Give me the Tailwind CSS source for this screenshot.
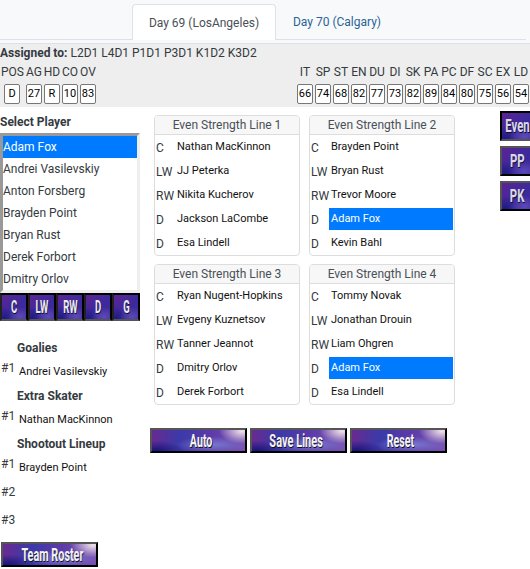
<!doctype html>
<html><head><meta charset="utf-8"><script src="https://cdn.jsdelivr.net/npm/@tailwindcss/browser@4"></script></head>
<body class="w-[530px] h-[569px] overflow-hidden bg-white font-['Roboto',sans-serif] text-[12px] leading-[18px] text-[#212529]">
<!-- tabs -->
<div class="h-[44px] bg-[#f8f9fa] pt-[4px] border-b border-[#dee2e6]">
  <div class="flex h-[36px] pl-[132px] mr-[4px] border-b border-[#dee2e6]">
    <div class="w-[144px] h-[36px] bg-white border border-b-0 border-[#dee2e6] rounded-t-[4px] flex items-center justify-center text-[#495057]">Day 69 (LosAngeles)</div>
    <div class="w-[122px] h-[35px] flex items-center justify-center text-[#2a6496]">Day 70 (Calgary)</div>
  </div>
</div>
<!-- player info -->
<div class="h-[63px] bg-[#eeeeee] text-[#343a40]">
  <div class="h-[19px] pb-[2px] flex items-center"><b class="font-bold">Assigned to:</b><span class="ml-[3px]">L2D1 L4D1 P1D1 P3D1 K1D2 K3D2</span></div>
  <div class="flex">
    <div class="w-[25px] flex flex-col items-start"><span class="pl-[1px]">POS</span><span class="mt-[3px] ml-[4px] w-[16px] h-[20px] bg-white border border-[#777] rounded-[2px] text-[11px] text-black flex items-center justify-center">D</span></div>
    <div class="w-[18px] flex flex-col items-center"><span>AG</span><span class="mt-[3px] w-[16px] h-[20px] bg-white border border-[#777] rounded-[2px] text-[11px] text-black flex items-center justify-center">27</span></div>
    <div class="w-[18px] flex flex-col items-center"><span>HD</span><span class="mt-[3px] w-[16px] h-[20px] bg-white border border-[#777] rounded-[2px] text-[11px] text-black flex items-center justify-center">R</span></div>
    <div class="w-[18px] flex flex-col items-center"><span>CO</span><span class="mt-[3px] w-[16px] h-[20px] bg-white border border-[#777] rounded-[2px] text-[11px] text-black flex items-center justify-center">10</span></div>
    <div class="w-[18px] flex flex-col items-center"><span>OV</span><span class="mt-[3px] w-[16px] h-[20px] bg-white border border-[#777] rounded-[2px] text-[11px] text-black flex items-center justify-center">83</span></div>
    <div class="flex-1"></div>
    <div class="w-[18px] flex flex-col items-center"><span>IT</span><span class="mt-[3px] w-[16px] h-[20px] bg-white border border-[#777] rounded-[2px] text-[11px] text-black flex items-center justify-center">66</span></div>
    <div class="w-[18px] flex flex-col items-center"><span>SP</span><span class="mt-[3px] w-[16px] h-[20px] bg-white border border-[#777] rounded-[2px] text-[11px] text-black flex items-center justify-center">74</span></div>
    <div class="w-[18px] flex flex-col items-center"><span>ST</span><span class="mt-[3px] w-[16px] h-[20px] bg-white border border-[#777] rounded-[2px] text-[11px] text-black flex items-center justify-center">68</span></div>
    <div class="w-[18px] flex flex-col items-center"><span>EN</span><span class="mt-[3px] w-[16px] h-[20px] bg-white border border-[#777] rounded-[2px] text-[11px] text-black flex items-center justify-center">82</span></div>
    <div class="w-[18px] flex flex-col items-center"><span>DU</span><span class="mt-[3px] w-[16px] h-[20px] bg-white border border-[#777] rounded-[2px] text-[11px] text-black flex items-center justify-center">77</span></div>
    <div class="w-[18px] flex flex-col items-center"><span>DI</span><span class="mt-[3px] w-[16px] h-[20px] bg-white border border-[#777] rounded-[2px] text-[11px] text-black flex items-center justify-center">73</span></div>
    <div class="w-[18px] flex flex-col items-center"><span>SK</span><span class="mt-[3px] w-[16px] h-[20px] bg-white border border-[#777] rounded-[2px] text-[11px] text-black flex items-center justify-center">82</span></div>
    <div class="w-[18px] flex flex-col items-center"><span>PA</span><span class="mt-[3px] w-[16px] h-[20px] bg-white border border-[#777] rounded-[2px] text-[11px] text-black flex items-center justify-center">89</span></div>
    <div class="w-[18px] flex flex-col items-center"><span>PC</span><span class="mt-[3px] w-[16px] h-[20px] bg-white border border-[#777] rounded-[2px] text-[11px] text-black flex items-center justify-center">84</span></div>
    <div class="w-[18px] flex flex-col items-center"><span>DF</span><span class="mt-[3px] w-[16px] h-[20px] bg-white border border-[#777] rounded-[2px] text-[11px] text-black flex items-center justify-center">80</span></div>
    <div class="w-[18px] flex flex-col items-center"><span>SC</span><span class="mt-[3px] w-[16px] h-[20px] bg-white border border-[#777] rounded-[2px] text-[11px] text-black flex items-center justify-center">75</span></div>
    <div class="w-[18px] flex flex-col items-center"><span>EX</span><span class="mt-[3px] w-[16px] h-[20px] bg-white border border-[#777] rounded-[2px] text-[11px] text-black flex items-center justify-center">56</span></div>
    <div class="w-[18px] flex flex-col items-center"><span>LD</span><span class="mt-[3px] w-[16px] h-[20px] bg-white border border-[#777] rounded-[2px] text-[11px] text-black flex items-center justify-center">54</span></div>
  </div>
</div>
<div class="flex">
  <!-- left -->
  <div class="w-[150px] shrink-0">
    <div class="h-[26px] pt-[6px] font-bold text-[#343a40]">Select Player</div>
    <div class="w-[140px] h-[160px] border-[3px] border-t-[#999] border-l-[#999] border-r-[#eee] border-b-[#eee] text-[#343a40]">
      <div class="h-[22px] bg-[#007bff] text-white flex items-center">Adam Fox</div>
      <div class="h-[22px] flex items-center">Andrei Vasilevskiy</div>
      <div class="h-[22px] flex items-center">Anton Forsberg</div>
      <div class="h-[22px] flex items-center">Brayden Point</div>
      <div class="h-[22px] flex items-center">Bryan Rust</div>
      <div class="h-[22px] flex items-center">Derek Forbort</div>
      <div class="h-[22px] flex items-center">Dmitry Orlov</div>
    </div>
    <div class="flex w-[140px] h-[28px]">
      <div class="w-[28px] h-[28px] border-[2px] border-t-black border-l-[#222] border-r-black border-b-[#555] bg-[radial-gradient(ellipse_50%_40%_at_75%_90%,#5a4ab8_0%,transparent_100%),radial-gradient(ellipse_40%_50%_at_10%_100%,#1c1a80_0%,transparent_100%),linear-gradient(135deg,#5c2494,#3a2a9c_60%,#4a2a98)] flex items-center justify-center overflow-hidden"><span class="font-bold text-[19px] text-[#ecebf6] scale-x-[0.5] [text-shadow:1px_1px_0_#111]">C</span></div>
      <div class="w-[28px] h-[28px] border-[2px] border-t-black border-l-[#222] border-r-black border-b-[#555] bg-[radial-gradient(ellipse_50%_40%_at_75%_90%,#5a4ab8_0%,transparent_100%),radial-gradient(ellipse_40%_50%_at_10%_100%,#1c1a80_0%,transparent_100%),linear-gradient(135deg,#5c2494,#3a2a9c_60%,#4a2a98)] flex items-center justify-center overflow-hidden"><span class="font-bold text-[19px] text-[#ecebf6] scale-x-[0.5] [text-shadow:1px_1px_0_#111]">LW</span></div>
      <div class="w-[28px] h-[28px] border-[2px] border-t-black border-l-[#222] border-r-black border-b-[#555] bg-[radial-gradient(ellipse_50%_40%_at_75%_90%,#5a4ab8_0%,transparent_100%),radial-gradient(ellipse_40%_50%_at_10%_100%,#1c1a80_0%,transparent_100%),linear-gradient(135deg,#5c2494,#3a2a9c_60%,#4a2a98)] flex items-center justify-center overflow-hidden"><span class="font-bold text-[19px] text-[#ecebf6] scale-x-[0.5] [text-shadow:1px_1px_0_#111]">RW</span></div>
      <div class="w-[28px] h-[28px] border-[2px] border-t-black border-l-[#222] border-r-black border-b-[#555] bg-[radial-gradient(ellipse_50%_40%_at_75%_90%,#5a4ab8_0%,transparent_100%),radial-gradient(ellipse_40%_50%_at_10%_100%,#1c1a80_0%,transparent_100%),linear-gradient(135deg,#5c2494,#3a2a9c_60%,#4a2a98)] flex items-center justify-center overflow-hidden"><span class="font-bold text-[19px] text-[#ecebf6] scale-x-[0.5] [text-shadow:1px_1px_0_#111]">D</span></div>
      <div class="w-[28px] h-[28px] border-[2px] border-t-black border-l-[#222] border-r-black border-b-[#555] bg-[radial-gradient(ellipse_50%_40%_at_75%_90%,#5a4ab8_0%,transparent_100%),radial-gradient(ellipse_40%_50%_at_10%_100%,#1c1a80_0%,transparent_100%),linear-gradient(135deg,#5c2494,#3a2a9c_60%,#4a2a98)] flex items-center justify-center overflow-hidden"><span class="font-bold text-[19px] text-[#ecebf6] scale-x-[0.5] [text-shadow:1px_1px_0_#111]">G</span></div>
    </div>
    <div class="pl-[17px] mt-[18px] h-[18px] font-bold text-[#343a40]">Goalies</div>
    <div class="flex h-[30px] text-[#343a40]"><span class="w-[19px] pl-[1px] pt-[2px]">#1</span><span class="pt-[6px] text-[11px] text-[#111]">Andrei Vasilevskiy</span></div>
    <div class="pl-[17px] h-[18px] font-bold text-[#343a40]">Extra Skater</div>
    <div class="flex h-[30px] text-[#343a40]"><span class="w-[19px] pl-[1px] pt-[2px]">#1</span><span class="pt-[6px] text-[11px] text-[#111]">Nathan MacKinnon</span></div>
    <div class="pl-[17px] h-[18px] font-bold text-[#343a40]">Shootout Lineup</div>
    <div class="flex h-[28px] text-[#343a40]"><span class="w-[19px] pl-[1px] pt-[2px]">#1</span><span class="pt-[6px] text-[11px] text-[#111]">Brayden Point</span></div>
    <div class="h-[28px] pl-[1px] pt-[2px] text-[#343a40]">#2</div>
    <div class="h-[28px] pl-[1px] pt-[2px] text-[#343a40]">#3</div>
    <div class="ml-[1px] mt-[5px] pl-[6px] w-[97px] h-[25px] border-[2px] border-t-[#555] border-l-[#555] border-r-black border-b-black bg-[radial-gradient(ellipse_25%_60%_at_97%_5%,#f0e4ea_0%,transparent_100%),radial-gradient(ellipse_30%_50%_at_5%_100%,#14147a_0%,transparent_100%),radial-gradient(ellipse_40%_40%_at_65%_70%,#7878d0_0%,transparent_100%),linear-gradient(95deg,#6a2a90,#3a3aa8_30%,#5a3aa8_60%,#7a50b0)] flex items-center justify-center overflow-hidden"><span class="font-bold text-[19px] whitespace-nowrap text-[#f4f3fa] scale-x-[0.57] [text-shadow:1px_1px_0_#111]">Team Roster</span></div>
  </div>
  <!-- lines -->
  <div class="w-[350px] shrink-0 pl-[4px] pt-[8px]">
    <div class="grid grid-cols-[146px_146px] gap-x-[9px] gap-y-[8px]">
      <div class="h-[141px] border border-[#ddd] rounded-[4px] overflow-hidden">
        <div class="h-[19px] bg-[#f7f7f7] border-b border-[#ddd] flex items-center justify-center text-[#495057]">Even Strength Line 1</div>
        <div class="pt-[1px] text-[11px] text-[#111]">
          <div class="flex h-[24px]"><span class="w-[20px] pl-[1px] pt-[3px] text-[12px] text-[#343a40]">C</span><span class="flex-1 mr-[1px] h-[22px] pl-[2px] flex items-center">Nathan MacKinnon</span></div>
          <div class="flex h-[24px]"><span class="w-[20px] pl-[1px] pt-[3px] text-[12px] text-[#343a40]">LW</span><span class="flex-1 mr-[1px] h-[22px] pl-[2px] flex items-center">JJ Peterka</span></div>
          <div class="flex h-[24px]"><span class="w-[20px] pl-[1px] pt-[3px] text-[12px] text-[#343a40]">RW</span><span class="flex-1 mr-[1px] h-[22px] pl-[2px] flex items-center">Nikita Kucherov</span></div>
          <div class="flex h-[24px]"><span class="w-[20px] pl-[1px] pt-[3px] text-[12px] text-[#343a40]">D</span><span class="flex-1 mr-[1px] h-[22px] pl-[2px] flex items-center">Jackson LaCombe</span></div>
          <div class="flex h-[24px]"><span class="w-[20px] pl-[1px] pt-[3px] text-[12px] text-[#343a40]">D</span><span class="flex-1 mr-[1px] h-[22px] pl-[2px] flex items-center">Esa Lindell</span></div>
        </div>
      </div>
      <div class="h-[141px] border border-[#ddd] rounded-[4px] overflow-hidden">
        <div class="h-[19px] bg-[#f7f7f7] border-b border-[#ddd] flex items-center justify-center text-[#495057]">Even Strength Line 2</div>
        <div class="pt-[1px] text-[11px] text-[#111]">
          <div class="flex h-[24px]"><span class="w-[19px] pl-[1px] pt-[3px] text-[12px] text-[#343a40]">C</span><span class="flex-1 mr-[1px] h-[22px] pl-[2px] flex items-center">Brayden Point</span></div>
          <div class="flex h-[24px]"><span class="w-[19px] pl-[1px] pt-[3px] text-[12px] text-[#343a40]">LW</span><span class="flex-1 mr-[1px] h-[22px] pl-[2px] flex items-center">Bryan Rust</span></div>
          <div class="flex h-[24px]"><span class="w-[19px] pl-[1px] pt-[3px] text-[12px] text-[#343a40]">RW</span><span class="flex-1 mr-[1px] h-[22px] pl-[2px] flex items-center">Trevor Moore</span></div>
          <div class="flex h-[24px]"><span class="w-[19px] pl-[1px] pt-[3px] text-[12px] text-[#343a40]">D</span><span class="flex-1 mr-[1px] h-[22px] pl-[2px] flex items-center bg-[#007bff] text-white">Adam Fox</span></div>
          <div class="flex h-[24px]"><span class="w-[19px] pl-[1px] pt-[3px] text-[12px] text-[#343a40]">D</span><span class="flex-1 mr-[1px] h-[22px] pl-[2px] flex items-center">Kevin Bahl</span></div>
        </div>
      </div>
      <div class="h-[141px] border border-[#ddd] rounded-[4px] overflow-hidden">
        <div class="h-[19px] bg-[#f7f7f7] border-b border-[#ddd] flex items-center justify-center text-[#495057]">Even Strength Line 3</div>
        <div class="pt-[1px] text-[11px] text-[#111]">
          <div class="flex h-[24px]"><span class="w-[20px] pl-[1px] pt-[3px] text-[12px] text-[#343a40]">C</span><span class="flex-1 mr-[1px] h-[22px] pl-[2px] flex items-center">Ryan Nugent-Hopkins</span></div>
          <div class="flex h-[24px]"><span class="w-[20px] pl-[1px] pt-[3px] text-[12px] text-[#343a40]">LW</span><span class="flex-1 mr-[1px] h-[22px] pl-[2px] flex items-center">Evgeny Kuznetsov</span></div>
          <div class="flex h-[24px]"><span class="w-[20px] pl-[1px] pt-[3px] text-[12px] text-[#343a40]">RW</span><span class="flex-1 mr-[1px] h-[22px] pl-[2px] flex items-center">Tanner Jeannot</span></div>
          <div class="flex h-[24px]"><span class="w-[20px] pl-[1px] pt-[3px] text-[12px] text-[#343a40]">D</span><span class="flex-1 mr-[1px] h-[22px] pl-[2px] flex items-center">Dmitry Orlov</span></div>
          <div class="flex h-[24px]"><span class="w-[20px] pl-[1px] pt-[3px] text-[12px] text-[#343a40]">D</span><span class="flex-1 mr-[1px] h-[22px] pl-[2px] flex items-center">Derek Forbort</span></div>
        </div>
      </div>
      <div class="h-[141px] border border-[#ddd] rounded-[4px] overflow-hidden">
        <div class="h-[19px] bg-[#f7f7f7] border-b border-[#ddd] flex items-center justify-center text-[#495057]">Even Strength Line 4</div>
        <div class="pt-[1px] text-[11px] text-[#111]">
          <div class="flex h-[24px]"><span class="w-[19px] pl-[1px] pt-[3px] text-[12px] text-[#343a40]">C</span><span class="flex-1 mr-[1px] h-[22px] pl-[2px] flex items-center">Tommy Novak</span></div>
          <div class="flex h-[24px]"><span class="w-[19px] pl-[1px] pt-[3px] text-[12px] text-[#343a40]">LW</span><span class="flex-1 mr-[1px] h-[22px] pl-[2px] flex items-center">Jonathan Drouin</span></div>
          <div class="flex h-[24px]"><span class="w-[19px] pl-[1px] pt-[3px] text-[12px] text-[#343a40]">RW</span><span class="flex-1 mr-[1px] h-[22px] pl-[2px] flex items-center">Liam Ohgren</span></div>
          <div class="flex h-[24px]"><span class="w-[19px] pl-[1px] pt-[3px] text-[12px] text-[#343a40]">D</span><span class="flex-1 mr-[1px] h-[22px] pl-[2px] flex items-center bg-[#007bff] text-white">Adam Fox</span></div>
          <div class="flex h-[24px]"><span class="w-[19px] pl-[1px] pt-[3px] text-[12px] text-[#343a40]">D</span><span class="flex-1 mr-[1px] h-[22px] pl-[2px] flex items-center">Esa Lindell</span></div>
        </div>
      </div>
    </div>
    <div class="flex gap-[3px] mt-[23px] -ml-[4px]">
      <div class="w-[97px] h-[25px] pl-[6px] border-[2px] border-t-[#555] border-l-[#555] border-r-black border-b-black bg-[radial-gradient(ellipse_25%_60%_at_97%_5%,#f0e4ea_0%,transparent_100%),radial-gradient(ellipse_30%_50%_at_5%_100%,#14147a_0%,transparent_100%),radial-gradient(ellipse_40%_40%_at_65%_70%,#7878d0_0%,transparent_100%),linear-gradient(95deg,#6a2a90,#3a3aa8_30%,#5a3aa8_60%,#7a50b0)] flex items-center justify-center overflow-hidden"><span class="font-bold text-[19px] whitespace-nowrap text-[#f4f3fa] scale-x-[0.56] [text-shadow:1px_1px_0_#111]">Auto</span></div>
      <div class="w-[97px] h-[25px] pr-[4px] border-[2px] border-t-[#555] border-l-[#555] border-r-black border-b-black bg-[radial-gradient(ellipse_25%_60%_at_97%_5%,#f0e4ea_0%,transparent_100%),radial-gradient(ellipse_30%_50%_at_5%_100%,#14147a_0%,transparent_100%),radial-gradient(ellipse_40%_40%_at_65%_70%,#7878d0_0%,transparent_100%),linear-gradient(95deg,#6a2a90,#3a3aa8_30%,#5a3aa8_60%,#7a50b0)] flex items-center justify-center overflow-hidden"><span class="font-bold text-[19px] whitespace-nowrap text-[#f4f3fa] scale-x-[0.58] [text-shadow:1px_1px_0_#111]">Save Lines</span></div>
      <div class="w-[97px] h-[25px] pl-[4px] border-[2px] border-t-[#555] border-l-[#555] border-r-black border-b-black bg-[radial-gradient(ellipse_25%_60%_at_97%_5%,#f0e4ea_0%,transparent_100%),radial-gradient(ellipse_30%_50%_at_5%_100%,#14147a_0%,transparent_100%),radial-gradient(ellipse_40%_40%_at_65%_70%,#7878d0_0%,transparent_100%),linear-gradient(95deg,#6a2a90,#3a3aa8_30%,#5a3aa8_60%,#7a50b0)] flex items-center justify-center overflow-hidden"><span class="font-bold text-[19px] whitespace-nowrap text-[#f4f3fa] scale-x-[0.56] [text-shadow:1px_1px_0_#111]">Reset</span></div>
    </div>
  </div>
  <!-- side -->
  <div class="w-[34px] shrink-0 pt-[4px] flex flex-col">
    <div class="w-[34px] h-[30px] border-[2px] border-t-black border-l-black border-r-[#555] border-b-[#555] bg-[radial-gradient(ellipse_50%_40%_at_75%_90%,#5a4ab8_0%,transparent_100%),radial-gradient(ellipse_40%_50%_at_10%_100%,#1c1a80_0%,transparent_100%),linear-gradient(135deg,#5c2494,#3a2a9c_60%,#4a2a98)] flex items-center justify-center overflow-hidden"><span class="font-bold text-[19px] text-[#dcd8ee] scale-x-[0.6] [text-shadow:1px_1px_0_#111]">Even</span></div>
    <div class="mt-[5px] w-[34px] h-[30px] border-[2px] border-t-[#555] border-l-[#555] border-r-black border-b-black bg-[radial-gradient(ellipse_50%_40%_at_75%_90%,#5a4ab8_0%,transparent_100%),radial-gradient(ellipse_40%_50%_at_10%_100%,#1c1a80_0%,transparent_100%),linear-gradient(135deg,#5c2494,#3a2a9c_60%,#4a2a98)] flex items-center justify-center overflow-hidden"><span class="font-bold text-[19px] text-[#dcd8ee] scale-x-[0.6] [text-shadow:1px_1px_0_#111]">PP</span></div>
    <div class="mt-[5px] w-[34px] h-[30px] border-[2px] border-t-[#555] border-l-[#555] border-r-black border-b-black bg-[radial-gradient(ellipse_50%_40%_at_75%_90%,#5a4ab8_0%,transparent_100%),radial-gradient(ellipse_40%_50%_at_10%_100%,#1c1a80_0%,transparent_100%),linear-gradient(135deg,#5c2494,#3a2a9c_60%,#4a2a98)] flex items-center justify-center overflow-hidden"><span class="font-bold text-[19px] text-[#dcd8ee] scale-x-[0.6] [text-shadow:1px_1px_0_#111]">PK</span></div>
  </div>
</div>
</body></html>
